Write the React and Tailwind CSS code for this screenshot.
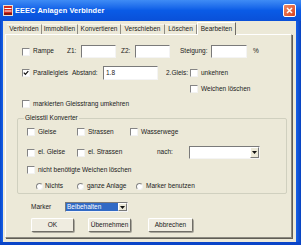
import React from "react";

const CB = ({ checked }) => (
  <span className="relative block w-[8px] h-[8px] shrink-0 bg-white border border-t-[#858585] border-l-[#858585] border-r-[#f2f2f2] border-b-[#f2f2f2]">
    {checked && (
      <svg className="absolute left-0 top-0" width="6" height="6" viewBox="0 0 6 6">
        <path d="M0.8 2.6 L2.4 4.3 L5.3 1.2" fill="none" stroke="#111" strokeWidth="1.2" />
      </svg>
    )}
  </span>
);

const Radio = () => (
  <span className="block w-[7px] h-[7px] shrink-0 rounded-full bg-white border border-t-[#858585] border-l-[#858585] border-r-[#f2f2f2] border-b-[#f2f2f2]" />
);

const Field = ({ className, children }) => (
  <span
    className={
      "flex items-center shrink-0 bg-white border border-t-[#7a7a7a] border-l-[#7a7a7a] border-r-[#f4f4f4] border-b-[#f4f4f4] " +
      className
    }
  >
    {children}
  </span>
);

const Arrow = () => (
  <span className="flex items-center justify-center w-[9px] h-full shrink-0 bg-[#ece9d8] border border-t-white border-l-white border-r-[#7a7a7a] border-b-[#7a7a7a]">
    <svg width="5" height="3" viewBox="0 0 5 3">
      <path d="M0 0 H5 L2.5 3 Z" fill="#111" />
    </svg>
  </span>
);

const Btn = ({ className, children }) => (
  <span
    className={
      "flex items-center justify-center h-[14px] shrink-0 rounded-[2px] bg-[#efece0] border border-t-white border-l-white border-r-[#6f6d66] border-b-[#6f6d66] shadow-[1px_1px_0_#a9a79c] " +
      className
    }
  >
    {children}
  </span>
);

const Tab = ({ className, children }) => (
  <span
    className={
      "flex items-center justify-center h-[10px] shrink-0 border-t border-t-[#f7f6f0] border-r border-r-[#8f8d84] " +
      className
    }
  >
    {children}
  </span>
);

export default function App() {
  return (
    <div className="w-[301px] h-[245px] flex flex-col overflow-hidden bg-[#0a4fd8] font-['Liberation_Sans',Arial,sans-serif] text-[6.5px] leading-none text-[#1a1a1a]">
      {/* title bar */}
      <div className="h-[21px] flex items-center pl-[3px] bg-linear-to-b from-[#3f8cf5] via-[#0a5be6] to-[#0a50d8] shrink-0">
        <svg width="10" height="11" viewBox="0 0 10 11" className="shrink-0">
          <rect x="0" y="0" width="10" height="11" fill="#e8e2d8" />
          <rect x="1" y="1" width="8" height="9" fill="#d42a1e" />
          <path d="M1.5 3.5 H8.5 M1.5 6 H8.5" stroke="#fff" strokeWidth="1" />
          <rect x="1" y="8" width="8" height="2" fill="#8a1810" />
        </svg>
        <span className="ml-[2px] text-white font-bold text-[7.4px] tracking-[0.1px]">
          EEEC Anlagen Verbinder
        </span>
        <span className="flex-1" />
        <span className="mr-[5px] flex items-center justify-center w-[13px] h-[13px] rounded-[2px] border border-white bg-linear-to-br from-[#f08a64] to-[#d8401c]">
          <svg width="7" height="7" viewBox="0 0 7 7">
            <path d="M1 1 L6 6 M6 1 L1 6" stroke="#fff" strokeWidth="1.5" />
          </svg>
        </span>
      </div>

      {/* body */}
      <div className="flex-1 flex">
        <div className="w-[3px] bg-linear-to-r from-[#0846c8] to-[#1660e8]" />
        <div className="flex-1 flex flex-col bg-[#ece9d8] pl-[2px] pr-[4px] pt-[1px] pb-[4px]">
          {/* tabs */}
          <div className="h-[12px] flex items-end pl-[2px] shrink-0">
            <Tab className="w-[35px]">Verbinden</Tab>
            <Tab className="w-[36px]">Immobilien</Tab>
            <Tab className="w-[43px]">Konvertieren</Tab>
            <Tab className="w-[44px]">Verschieben</Tab>
            <Tab className="w-[32px]">Löschen</Tab>
            <span className="relative z-10 -mb-[1px] flex items-center justify-center w-[39px] h-[13px] shrink-0 bg-[#ece9d8] border-t border-l border-t-white border-l-white border-r border-r-[#6f6d66]">
              Bearbeiten
            </span>
          </div>

          {/* panel */}
          <div className="flex-1 flex flex-col border border-t-white border-l-white border-r-[#8c8a80] border-b-[#8c8a80] shadow-[1px_1px_0_#5f5d55]">
            {/* row 1 */}
            <div className="mt-[10px] h-[13px] flex items-center pl-[16px]">
              <CB />
              <span className="ml-[3px] w-[34px]">Rampe</span>
              <span className="w-[14px]">Z1:</span>
              <Field className="w-[35px] h-[13px]" />
              <span className="ml-[5px] w-[14px]">Z2:</span>
              <Field className="w-[35px] h-[13px]" />
              <span className="ml-[10px] w-[31px]">Steigung:</span>
              <Field className="w-[36px] h-[13px]" />
              <span className="ml-[6px]">%</span>
            </div>

            {/* row 2 */}
            <div className="mt-[8px] h-[14px] flex items-center pl-[16px]">
              <CB checked />
              <span className="ml-[3px] w-[39px]">Parallelgleis</span>
              <span className="w-[31px]">Abstand:</span>
              <Field className="w-[55px] h-[14px] pl-[2px]">1.8</Field>
              <span className="ml-[8px] w-[24px]">2.Gleis:</span>
              <CB />
              <span className="ml-[3px]">unkehren</span>
            </div>

            {/* row 3 */}
            <div className="mt-[5px] h-[8px] flex items-center pl-[184px]">
              <CB />
              <span className="ml-[3px]">Weichen löschen</span>
            </div>

            {/* row 4 */}
            <div className="mt-[7px] h-[8px] flex items-center pl-[16px]">
              <CB />
              <span className="ml-[3px]">markierten Gleisstrang umkehren</span>
            </div>

            {/* group box */}
            <div className="relative mt-[10px] ml-[11px] w-[270px] h-[76px] flex flex-col rounded-[2px] border border-[#d0d0bf] shrink-0">
              <span className="absolute left-[6px] -top-[4px] px-[1px] bg-[#ece9d8]">Gleisstil Konverter</span>

              <div className="mt-[9px] h-[8px] flex items-center pl-[9px]">
                <CB />
                <span className="ml-[3px] w-[39px]">Gleise</span>
                <CB />
                <span className="ml-[3px] w-[42px]">Strassen</span>
                <CB />
                <span className="ml-[3px]">Wasserwege</span>
              </div>

              <div className="mt-[10px] h-[13px] flex items-center pl-[9px]">
                <CB />
                <span className="ml-[3px] w-[39px]">el. Gleise</span>
                <CB />
                <span className="ml-[3px] w-[69px]">el. Strassen</span>
                <span className="w-[32px]">nach:</span>
                <Field className="w-[71px] h-[13px] justify-end">
                  <Arrow />
                </Field>
              </div>

              <div className="mt-[7px] h-[8px] flex items-center pl-[9px]">
                <CB />
                <span className="ml-[3px]">nicht benötigte Weichen löschen</span>
              </div>

              <div className="mt-[8px] h-[8px] flex items-center pl-[18px]">
                <Radio />
                <span className="ml-[2px] w-[32px]">Nichts</span>
                <Radio />
                <span className="ml-[3px] w-[49px]">ganze Anlage</span>
                <Radio />
                <span className="ml-[3px]">Marker benutzen</span>
              </div>
            </div>

            {/* marker row */}
            <div className="mt-[8px] h-[10px] flex items-center pl-[25px]">
              <span className="w-[34px]">Marker</span>
              <Field className="w-[63px] h-[10px]">
                <span className="flex-1 h-full flex items-center pl-[1px] bg-[#316ac5] text-white">Beibehalten</span>
                <Arrow />
              </Field>
            </div>

            {/* buttons */}
            <div className="mt-[6px] h-[14px] flex items-center pl-[25px]">
              <Btn className="w-[43px]">OK</Btn>
              <Btn className="ml-[14px] w-[43px]">Übernehmen</Btn>
              <Btn className="ml-[17px] w-[45px]">Abbrechen</Btn>
            </div>
          </div>
        </div>
        <div className="w-[5px] bg-linear-to-r from-[#1660e8] to-[#0843c0]" />
      </div>
      <div className="h-[3px] bg-[#0a45c8] shrink-0" />
    </div>
  );
}
